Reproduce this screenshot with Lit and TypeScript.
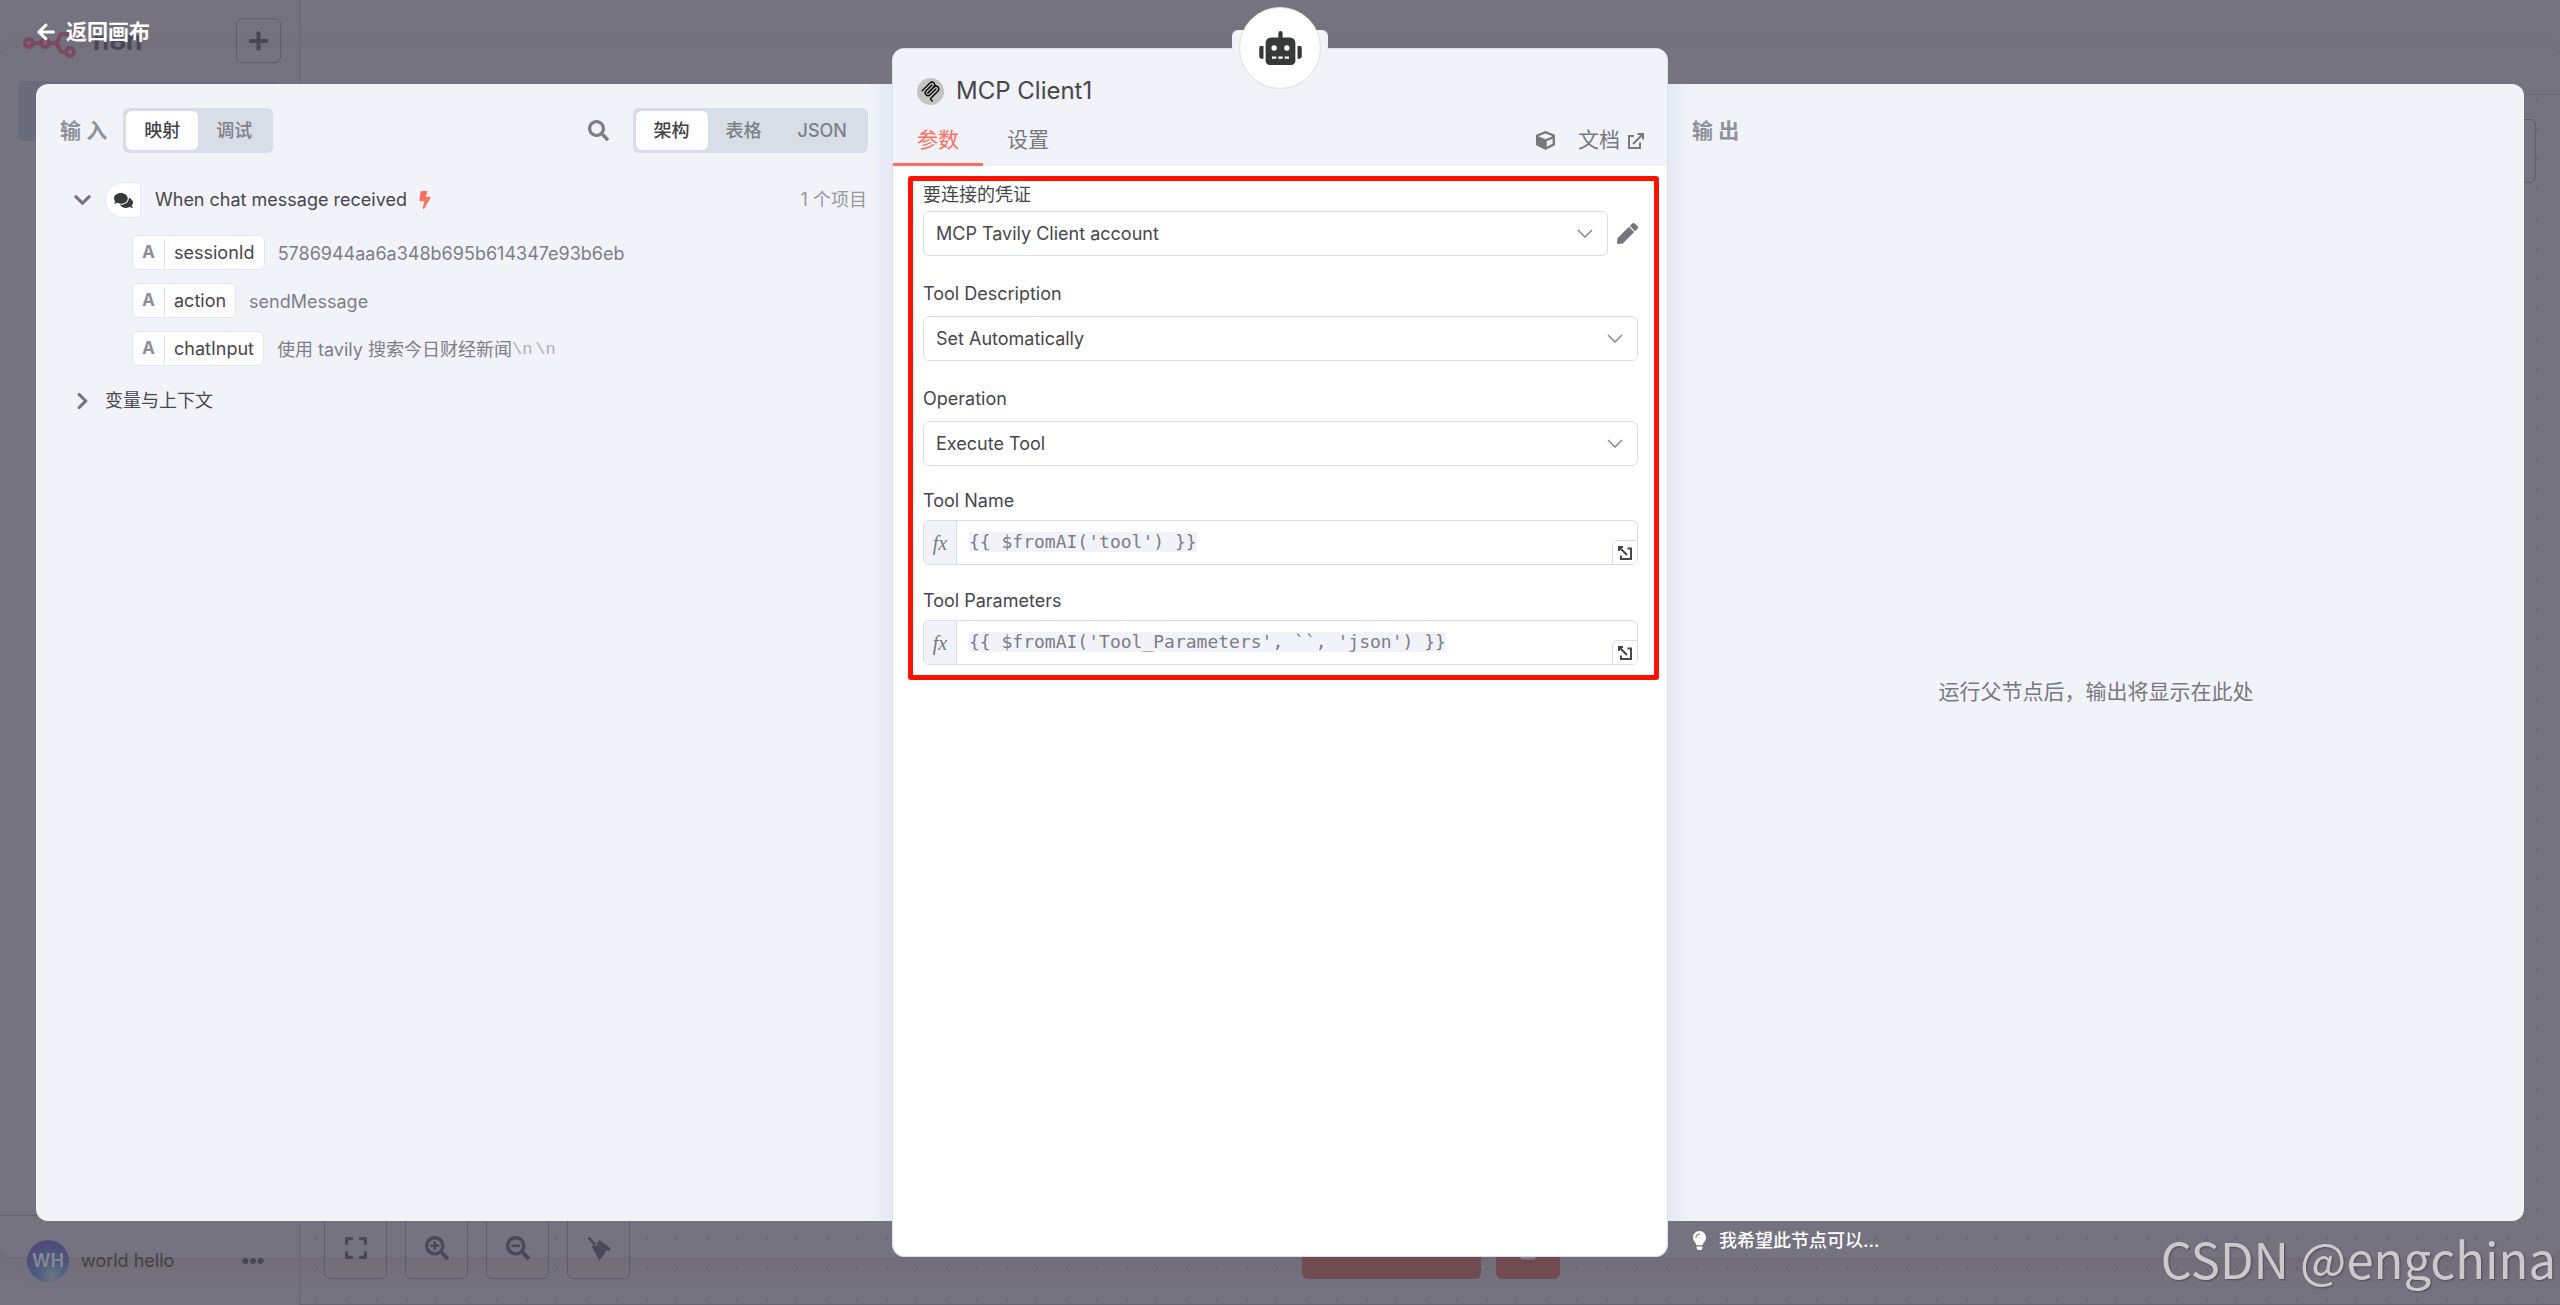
import { LitElement, html, css, svg, nothing } from "lit";
import { customElement, property } from "lit/decorators.js";

interface Glyph {
  box: string;
  paths: string[];
}

const GLYPHS: Record<string, Glyph> = {
  search: { box: "0 0 512 512", paths: ["M505 442.7L405.3 343c-4.5-4.5-10.6-7-17-7H372c27.6-35.3 44-79.7 44-128C416 93.1 322.9 0 208 0S0 93.1 0 208s93.1 208 208 208c48.3 0 92.7-16.4 128-44v16.3c0 6.4 2.5 12.5 7 17l99.7 99.7c9.4 9.4 24.6 9.4 33.9 0l28.3-28.3c9.4-9.4 9.4-24.6.1-34zM208 336c-70.7 0-128-57.2-128-128 0-70.7 57.2-128 128-128 70.7 0 128 57.2 128 128 0 70.7-57.2 128-128 128z"] },
  zoomIn: { box: "0 0 512 512", paths: ["M304 192v32c0 6.6-5.4 12-12 12h-56v56c0 6.6-5.4 12-12 12h-32c-6.6 0-12-5.4-12-12v-56h-56c-6.6 0-12-5.4-12-12v-32c0-6.6 5.4-12 12-12h56v-56c0-6.6 5.4-12 12-12h32c6.6 0 12 5.4 12 12v56h56c6.6 0 12 5.4 12 12zm201 284.7L476.7 505c-9.4 9.4-24.6 9.4-33.9 0L343 405.3c-4.5-4.5-7-10.6-7-17V372c-35.3 27.6-79.7 44-128 44C93.1 416 0 322.9 0 208S93.1 0 208 0s208 93.1 208 208c0 48.3-16.4 92.7-44 128h16.3c6.4 0 12.5 2.5 17 7l99.7 99.7c9.3 9.4 9.3 24.6 0 34zM344 208c0-75.2-60.8-136-136-136S72 132.8 72 208s60.8 136 136 136 136-60.8 136-136z"] },
  zoomOut: { box: "0 0 512 512", paths: ["M304 192v32c0 6.6-5.4 12-12 12H124c-6.6 0-12-5.4-12-12v-32c0-6.6 5.4-12 12-12h168c6.6 0 12 5.4 12 12zm201 284.7L476.7 505c-9.4 9.4-24.6 9.4-33.9 0L343 405.3c-4.5-4.5-7-10.6-7-17V372c-35.3 27.6-79.7 44-128 44C93.1 416 0 322.9 0 208S93.1 0 208 0s208 93.1 208 208c0 48.3-16.4 92.7-44 128h16.3c6.4 0 12.5 2.5 17 7l99.7 99.7c9.3 9.4 9.3 24.6 0 34zM344 208c0-75.2-60.8-136-136-136S72 132.8 72 208s60.8 136 136 136 136-60.8 136-136z"] },
  expand: { box: "0 32 448 448", paths: ["M0 180V56c0-13.300 10.700-24 24-24h124c6.600 0 12 5.400 12 12v40c0 6.600-5.400 12-12 12H64v84c0 6.600-5.400 12-12 12H12c-6.600 0-12-5.400-12-12zM288 44v40c0 6.600 5.400 12 12 12h84v84c0 6.600 5.400 12 12 12h40c6.600 0 12-5.400 12-12V56c0-13.300-10.700-24-24-24H300c-6.600 0-12 5.400-12 12zm148 276h-40c-6.600 0-12 5.400-12 12v84h-84c-6.600 0-12 5.400-12 12v40c0 6.600 5.400 12 12 12h124c13.300 0 24-10.700 24-24V332c0-6.600-5.400-12-12-12zM160 468v-40c0-6.600-5.400-12-12-12H64v-84c0-6.600-5.400-12-12-12H12c-6.600 0-12 5.400-12 12v124c0 13.300 10.700 24 24 24h124c6.600 0 12-5.400 12-12z"] },
  tidy: { box: "0 0 24 24", paths: ["M2.200 0.600L0.600 2.200L6.600 9L4.800 10.800L12.200 24L16.500 19.500L19.500 13.500L21.500 15.500L23.800 12.500L14.200 5.200L12.500 7L10.800 8.600L8.800 7.500ZM12.800 4L14 5L9.500 10L8.200 9Z"] },
  comments: { box: "0 0 576 512", paths: ["M416 192c0-88.400-93.100-160-208-160S0 103.600 0 192c0 34.300 14.100 65.900 38 92-13.400 30.200-35.500 54.200-35.800 54.500-2.200 2.300-2.800 5.700-1.500 8.700S4.800 352 8 352c36.600 0 66.900-12.300 88.700-25 32.200 15.700 70.300 25 111.300 25 114.900 0 208-71.600 208-160zm122 220c23.900-26 38-57.700 38-92 0-66.900-53.500-124.200-129.300-148.100.9 6.600 1.300 13.300 1.300 20.100 0 105.900-107.700 192-240 192-10.800 0-21.300-.8-31.700-1.900C207.800 439.600 281.800 480 368 480c41 0 79.100-9.200 111.300-25 21.800 12.700 52.100 25 88.700 25 3.200 0 6.100-1.900 7.300-4.800 1.300-2.900.7-6.300-1.500-8.700-.3-.3-22.400-24.200-35.800-54.500z"] },
  bolt: { box: "0 0 320 512", paths: ["M296 160H180.600l42.600-129.800C227.200 15 215.700 0 200 0H56C44 0 33.800 8.900 32.200 20.800l-32 240C-1.700 275.200 9.500 288 24 288h118.700L96.600 482.500c-3.600 15.200 8 29.500 23.300 29.500 8.400 0 16.400-4.400 20.800-12l176-304c9.300-15.900-2.200-36-20.700-36z"] },
  robot: { box: "0 0 640 512", paths: ["M32,224H64V416H32A31.966,31.966,0,0,1,0,384V256A31.966,31.966,0,0,1,32,224Zm512-48V448a64.063,64.063,0,0,1-64,64H160a64.063,64.063,0,0,1-64-64V176a79.974,79.974,0,0,1,80-80H288V32a32,32,0,0,1,64,0V96H464A79.974,79.974,0,0,1,544,176ZM264,256a40,40,0,1,0-40,40A39.997,39.997,0,0,0,264,256Zm-8,128H192v32h64Zm96,0H288v32h64ZM456,256a40,40,0,1,0-40,40A39.997,39.997,0,0,0,456,256Zm-8,128H384v32h64ZM640,256V384a31.966,31.966,0,0,1-32,32H576V224h32A31.966,31.966,0,0,1,640,256Z"] },
  cube: { box: "0 0 512 512", paths: ["M239.100 6.300l-208 78c-18.700 7-31.100 25-31.100 45v225.100c0 18.200 10.300 34.800 26.500 42.900l208 104c13.500 6.800 29.400 6.800 42.900 0l208-104c16.300-8.100 26.500-24.800 26.500-42.900V129.300c0-20-12.400-37.900-31.100-44.900l-208-78C262 2.200 250 2.200 239.100 6.300zM256 68.400l192 72v1.100l-192 78-192-78v-1.100l192-72zm32 356V275.500l160-65v133.900l-160 80z"] },
  chevron: { box: "0 0 448 512", paths: ["M207.029 381.476L12.686 187.132c-9.373-9.373-9.373-24.569 0-33.941l22.667-22.667c9.357-9.357 24.522-9.375 33.901-.04L224 284.505l154.745-154.021c9.379-9.335 24.544-9.317 33.901.04l22.667 22.667c9.373 9.373 9.373 24.569 0 33.941L240.971 381.476c-9.373 9.372-24.569 9.372-33.942 0z"] },
  plus: { box: "0 0 448 512", paths: ["M416 208H272V64c0-17.670-14.330-32-32-32h-32c-17.670 0-32 14.330-32 32v144H32c-17.670 0-32 14.330-32 32v32c0 17.670 14.330 32 32 32h144v144c0 17.670 14.330 32 32 32h32c17.670 0 32-14.330 32-32V304h144c17.670 0 32-14.330 32-32v-32c0-17.670-14.330-32-32-32z"] },
  arrowLeft: { box: "0 0 448 512", paths: ["M257.500 445.100l-22.200 22.200c-9.400 9.400-24.600 9.400-33.900 0L7 273c-9.400-9.400-9.400-24.600 0-33.900L201.400 44.700c9.400-9.400 24.600-9.400 33.900 0l22.200 22.200c9.500 9.500 9.300 25-.4 34.300L136.600 216H424c13.300 0 24 10.700 24 24v32c0 13.300-10.700 24-24 24H136.600l120.500 114.800c9.800 9.300 10 24.800.4 34.300z"] },
  bulb: { box: "0 0 352 512", paths: ["M96.060 454.350c.01 6.290 1.870 12.450 5.360 17.690l17.090 25.690a31.990 31.990 0 0 0 26.640 14.280h61.710a31.990 31.990 0 0 0 26.640-14.280l17.090-25.690a31.989 31.989 0 0 0 5.360-17.690l.04-38.350H96.010l.05 38.350zM0 176c0 44.370 16.450 84.850 43.560 115.780 16.520 18.850 42.360 58.230 52.210 91.450.04.26.07.52.11.78h160.240c.04-.26.07-.51.11-.78 9.850-33.220 35.690-72.600 52.210-91.450C335.550 260.850 352 220.370 352 176 352 78.610 272.910-.3 175.450 0 73.440.31 0 82.970 0 176zm176-80c-44.110 0-80 35.890-80 80 0 8.840-7.160 16-16 16s-16-7.160-16-16c0-61.760 50.240-112 112-112 8.840 0 16 7.160 16 16s-7.160 16-16 16z"] },
  pen: { box: "0 0 512 512", paths: ["M290.740 93.240l128.020 128.020-277.990 277.990-114.140 12.600C11.350 513.540-1.560 500.620.14 485.340l12.700-114.220 277.900-277.880zm207.200-19.060l-60.110-60.110c-18.750-18.750-49.160-18.750-67.910 0l-56.550 56.550 128.020 128.020 56.550-56.550c18.750-18.760 18.750-49.160 0-67.910z"] },
  dots: { box: "0 0 512 512", paths: ["M328 256c0 39.800-32.200 72-72 72s-72-32.200-72-72 32.200-72 72-72 72 32.200 72 72zm104-72c-39.800 0-72 32.200-72 72s32.200 72 72 72 72-32.200 72-72-32.200-72-72-72zm-352 0c-39.800 0-72 32.200-72 72s32.200 72 72 72 72-32.200 72-72-32.200-72-72-72z"] },
  comment: { box: "0 0 512 512", paths: ["M256 32C114.600 32 0 125.100 0 240c0 49.600 21.400 95 57 130.700C44.500 421.100 2.700 466 2.200 466.500c-2.200 2.300-2.800 5.700-1.500 8.700S4.800 480 8 480c66.300 0 116-31.800 140.600-51.400 32.700 12.300 69 19.400 107.400 19.400 141.400 0 256-93.100 256-208S397.400 32 256 32z"] },
  trash: { box: "0 0 448 512", paths: ["M432 32H312l-9.400-18.700A24 24 0 0 0 281.100 0H166.800a23.720 23.720 0 0 0-21.400 13.300L136 32H16A16 16 0 0 0 0 48v32a16 16 0 0 0 16 16h416a16 16 0 0 0 16-16V48a16 16 0 0 0-16-16zM53.200 467a48 48 0 0 0 47.900 45h245.800a48 48 0 0 0 47.900-45L416 128H32z"] },
};

@customElement("n-icon")
class NIcon extends LitElement {
  @property() name = "search";
  static styles = css`
    :host { display: inline-flex; flex: none; }
    svg { display: block; width: 100%; height: 100%; fill: currentColor; }
  `;
  render() {
    const glyph = GLYPHS[this.name];
    return html`<svg viewBox=${glyph.box} aria-hidden="true">${glyph.paths.map((d) => svg`<path d=${d}></path>`)}</svg>`;
  }
}

@customElement("n-toggle")
class NToggle extends LitElement {
  @property({ attribute: false }) options: string[] = [];
  static styles = css`
    :host { display: flex; padding: 3px; border-radius: 6px; background: #d9dde8; }
    button {
      height: 39px; padding: 0 18px; border: 0; border-radius: 6px; background: none;
      font: 500 18px/24px Inter, "Noto Sans CJK SC", sans-serif; color: #7d7f87;
    }
    .on { background: #fff; color: #414244; }
  `;
  render() {
    return this.options.map((label, i) => html`<button class=${i === 0 ? "on" : ""} aria-pressed=${i === 0}>${label}</button>`);
  }
}

@customElement("canvas-page")
class CanvasPage extends LitElement {
  static styles = css`
    :host {
      display: grid; grid-template: 95px 1fr / 300px 1fr; overflow: hidden;
      color: #4a4857; background: #75737f;
      font: 18px/24px Inter, "Noto Sans CJK SC", sans-serif;
    }
    button { display: flex; align-items: center; justify-content: center; color: inherit; font: inherit; background: none; border: 1px solid #5f5d6e; border-radius: 6px; padding: 0; }
    .side { grid-row: 1 / 3; display: flex; flex-direction: column; border-right: 1px solid #696779; }
    .brand { display: flex; align-items: center; padding: 18px 18px 0 23px; }
    .logo { width: 62px; height: 36px; fill: none; stroke: #7e4a60; stroke-width: 4; }
    .name { margin-left: 8px; font-size: 26px; line-height: 36px; font-weight: 700; }
    .plus { width: 45px; height: 45px; margin-left: auto; }
    .plus n-icon { width: 19px; height: 22px; }
    .entry { height: 60px; margin: 18px; border-radius: 6px; background: #696b7a; }
    .user { display: flex; align-items: center; margin-top: auto; height: 89px; padding: 0 35px 0 27px; border-top: 1px solid #666476; }
    .avatar { display: grid; place-items: center; width: 42px; height: 42px; border-radius: 50%; color: #8e8d97; font-weight: 600; background: radial-gradient(circle at 60% 85%, #6c7486 5%, #4c5f83 35%, #51497a 75%); }
    .who { margin-left: 12px; margin-right: auto; color: #444249; }
    .user n-icon { width: 22px; height: 22px; }
    .top { border-bottom: 1px solid #6a6878; }
    .board {
      display: flex; align-items: flex-end; padding: 0 24px 25px; border-bottom: 1px solid #66646f; position: relative;
      background: radial-gradient(circle, #696777 1px, transparent 2px) 2px -11px / 30px 30px;
    }
    .tools { display: flex; gap: 18px; }
    .tools button { width: 63px; height: 63px; background: #75737f; }
    .tools n-icon { width: 24px; height: 24px; }
    .tools .fit { width: 22px; height: 22px; }
    .run { display: flex; gap: 15px; margin-left: 672px; }
    .run button { height: 63px; padding: 0 22px; gap: 12px; border: 0; color: #8b8790; background: #744c54; }
    .run .chat { width: 179px; }
    .run n-icon { width: 20px; height: 24px; }
    .float { position: absolute; top: 24px; right: 24px; width: 60px; height: 64px; box-sizing: border-box; border: 1px solid #5f5d6e; border-radius: 6px; background: #75737f; }
  `;
  render() {
    return html`
      <nav class="side">
        <div class="brand">
          <svg class="logo" viewBox="0 0 62 36" aria-hidden="true">
            <circle cx="6" cy="20" r="4"></circle><circle cx="22" cy="20" r="4"></circle>
            <circle cx="54" cy="11" r="4"></circle><circle cx="47" cy="29" r="4"></circle>
            <path d="M10 20h8M26 20h5c3 0 4-2 5-5s2-4 5-4h9M31 20c3 0 4 2 5 5s2 4 5 4h2"></path>
          </svg>
          <span class="name">n8n</span>
          <button class="plus" aria-label="新建"><n-icon name="plus"></n-icon></button>
        </div>
        <div class="entry"></div>
        <div class="user">
          <span class="avatar">WH</span><span class="who">world hello</span><n-icon name="dots"></n-icon>
        </div>
      </nav>
      <div class="top"></div>
      <div class="board">
        <div class="float"></div>
        <div class="tools">
          <button aria-label="适应视图"><n-icon class="fit" name="expand"></n-icon></button>
          <button aria-label="放大"><n-icon name="zoomIn"></n-icon></button>
          <button aria-label="缩小"><n-icon name="zoomOut"></n-icon></button>
          <button aria-label="整理"><n-icon name="tidy"></n-icon></button>
        </div>
        <div class="run">
          <button class="chat"><n-icon name="comment"></n-icon>隐藏聊天</button>
          <button aria-label="删除"><n-icon name="trash"></n-icon></button>
        </div>
      </div>
    `;
  }
}

@customElement("input-panel")
class InputPanel extends LitElement {
  fields = [
    { key: "sessionId", value: "5786944aa6a348b695b614347e93b6eb", breaks: 0 },
    { key: "action", value: "sendMessage", breaks: 0 },
    { key: "chatInput", value: "使用 tavily 搜索今日财经新闻", breaks: 2 },
  ];
  static styles = css`
    :host { display: block; font: 18px/24px Inter, "Noto Sans CJK SC", sans-serif; color: #46474a; }
    .bar { display: flex; align-items: center; padding: 24px 24px 0 24px; }
    .title { font-size: 21px; font-weight: 600; color: #8f9199; margin-right: 16px; }
    .find { border: 0; background: none; padding: 0; width: 21px; height: 21px; margin: 0 24px 0 auto; color: #7d7f87; }
    .find n-icon { width: 21px; height: 21px; }
    .node { display: flex; align-items: center; padding: 29px 25px 0 38px; }
    .arrow { width: 17px; height: 20px; color: #74767e; }
    .side { transform: rotate(-90deg); }
    .badge { display: grid; place-items: center; width: 34px; height: 34px; margin: 0 14px; border: 1px solid #e6e9f2; border-radius: 18px 4px 4px 18px; background: #fff; color: #37383a; }
    .badge n-icon { width: 19px; height: 17px; }
    .bolt { width: 12px; height: 18px; margin-left: 12px; color: #ff6f5c; }
    .count { margin-left: auto; color: #96989f; }
    dl { display: grid; gap: 13px; margin: 17px 0 0; padding: 0 25px 0 96px; }
    .row { display: flex; align-items: center; gap: 13px; }
    dt { display: flex; align-items: center; height: 33px; border: 1px solid #e3e7f1; border-radius: 6px; background: #fff; }
    .type { width: 31px; text-align: center; font: bold 20px/28px "Liberation Mono", monospace; color: #8d8f97; border-right: 1px solid #dcdfe9; }
    .key { padding: 0 9px; }
    dd { display: flex; margin: 0; padding-top: 2px; color: #7d7f87; }
    .breaks { display: flex; gap: 3px; font: 17px/24px "Liberation Mono", monospace; color: #a9afbd; }
    .vars { display: flex; align-items: center; gap: 14px; padding: 23px 0 0 38px; }
  `;
  render() {
    return html`
      <div class="bar">
        <span class="title">输 入</span>
        <n-toggle .options=${["映射", "调试"]}></n-toggle>
        <button class="find" aria-label="搜索"><n-icon name="search"></n-icon></button>
        <n-toggle .options=${["架构", "表格", "JSON"]}></n-toggle>
      </div>
      <div class="node">
        <n-icon class="arrow" name="chevron"></n-icon>
        <span class="badge"><n-icon name="comments"></n-icon></span>
        <span>When chat message received</span>
        <n-icon class="bolt" name="bolt"></n-icon>
        <span class="count">1 个项目</span>
      </div>
      <dl>
        ${this.fields.map((f) => html`
          <div class="row">
            <dt><span class="type">A</span><span class="key">${f.key}</span></dt>
            <dd>${f.value}${f.breaks ? html`<span class="breaks">${Array.from({ length: f.breaks }, () => html`<span>\\n</span>`)}</span>` : nothing}</dd>
          </div>`)}
      </dl>
      <div class="vars"><n-icon class="arrow side" name="chevron"></n-icon><span>变量与上下文</span></div>
    `;
  }
}

@customElement("node-panel")
class NodePanel extends LitElement {
  static styles = css`
    :host {
      display: block; position: relative; box-sizing: border-box; border: 1px solid #dcdfec; border-radius: 12px; background: #fff;
      font: 18px/22px Inter, "Noto Sans CJK SC", sans-serif; color: #46474a;
    }
    .ear { position: absolute; top: -19px; left: calc(50% - 48px); width: 96px; height: 24px; border-radius: 6px 6px 0 0; background: #f1f3f9; }
    .node { position: absolute; top: -42px; left: calc(50% - 41px); display: grid; place-items: center; box-sizing: border-box; width: 82px; height: 82px; border: 1px solid #dcdfec; border-radius: 50%; background: #fff; color: #37383a; }
    .node n-icon { width: 43px; height: 34px; }
    header { border-radius: 11px 11px 0 0; background: #f1f3f9; }
    .head { display: flex; align-items: center; gap: 12px; padding: 24px 23px 0 24px; }
    .head svg { width: 27px; height: 27px; }
    h1 { margin: 0; font-size: 24px; line-height: 36px; font-weight: 400; }
    .tabs { display: flex; align-items: center; padding: 6px 23px 0 0; font-size: 21px; line-height: 30px; color: #77797f; }
    .tabs button, .tabs a { font: inherit; color: inherit; text-decoration: none; background: none; border: 0; border-bottom: 3px solid transparent; padding: 10px 24px 8px; display: flex; align-items: center; }
    .tabs .on { color: #ff6f5c; border-color: #ff6f5c; }
    .cube { width: 19px; height: 19px; margin-left: auto; }
    .tabs a { padding: 10px 0 8px; margin-left: 23px; gap: 8px; }
    .tabs a svg { width: 16px; height: 16px; margin-top: 2px; fill: none; stroke: currentColor; stroke-width: 2; }
    form { position: relative; margin: 18px 29px 0 30px; display: grid; gap: 27px; }
    .mark { position: absolute; inset: -8px -21px -15px -15px; border: 5px solid #ff1100; border-radius: 3px; pointer-events: none; }
    .field { display: grid; gap: 11px; }
    .tight { gap: 5px; }
    .stack { display: grid; gap: 25px; margin-top: -3px; }
    .stack .field { gap: 8px; }
    label { justify-self: start; }
    .line { display: flex; align-items: center; }
    .pick { flex: 1; display: grid; align-items: center; }
    .pick > * { grid-area: 1 / 1; }
    .pick svg { justify-self: end; width: 16px; height: 9px; margin-right: 15px; fill: none; stroke: #7b7d85; stroke-width: 1.3; pointer-events: none; }
    select { appearance: none; width: 100%; height: 45px; padding: 0 40px 0 12px; border: 1px solid #d9dce9; border-radius: 6px; background: #fff; font: inherit; color: inherit; }
    .edit { border: 0; background: none; padding: 0; width: 21px; height: 21px; margin-left: 9px; color: #74767e; }
    .edit n-icon { width: 21px; height: 21px; }
    .expr { display: flex; align-items: center; height: 45px; box-sizing: border-box; border: 1px solid #d9dce9; border-radius: 6px; overflow: hidden; }
    .fx { display: grid; place-items: center; align-self: stretch; width: 32px; border-right: 1px solid #d9dce9; background: #f1f3f9; font: italic 20px/24px "Liberation Serif", serif; color: #77797f; }
    input { field-sizing: content; border: 0; margin: 0 0 2px 12px; padding: 0; height: 20px; background: #f1f3f9; font: 18px/20px "DejaVu Sans Mono", monospace; color: #7b7d83; }
    .open { align-self: flex-end; margin: 0 -1px -1px auto; width: 26px; height: 25px; padding: 0; display: grid; place-items: center; border: 1px solid #d9dce9; border-radius: 6px 0 0 0; background: #fff; color: #46474a; }
    .open svg { width: 14px; height: 14px; fill: none; stroke: currentColor; stroke-width: 2; }
  `;

  private picker(id: string, value: string) {
    return html`<div class="pick">
      <select id=${id}><option>${value}</option></select>
      <svg viewBox="0 0 16 9" aria-hidden="true"><path d="M1 1L8 8L15 1"></path></svg>
    </div>`;
  }

  private expression(id: string, label: string, value: string) {
    return html`<div class="field">
      <label for=${id}>${label}</label>
      <div class="expr">
        <span class="fx">fx</span>
        <input id=${id} size=${value.length} .value=${value} />
        <button class="open" type="button" aria-label="展开">
          <svg viewBox="0 0 14 14" aria-hidden="true"><path d="M1.500 1.500L9 9M1 5V1H5M9.500 2.500H13V13H3V9.500"></path></svg>
        </button>
      </div>
    </div>`;
  }

  render() {
    return html`
      <div class="ear"></div>
      <header>
        <div class="head">
          <svg viewBox="0 0 28 28" aria-hidden="true">
            <circle cx="14" cy="14" r="14" fill="#c4c4c4"></circle>
            <g transform="translate(3 3) scale(.122)" fill="none" stroke="#000" stroke-width="12" stroke-linecap="round">
              <path d="M18 84.853L85.882 16.971C95.255 7.598 110.451 7.598 119.823 16.971C129.196 26.343 129.196 41.539 119.823 50.912L68.558 102.177"></path>
              <path d="M69.265 101.470L119.823 50.912C129.196 41.539 144.392 41.539 153.765 50.912L154.118 51.265C163.491 60.638 163.491 75.834 154.118 85.206L92.725 146.600C89.601 149.724 89.601 154.789 92.725 157.913L105.331 170.520"></path>
              <path d="M102.853 33.941L52.648 84.146C43.276 93.518 43.276 108.714 52.648 118.087C62.021 127.459 77.217 127.459 86.589 118.087L136.794 67.882"></path>
            </g>
          </svg>
          <h1>MCP Client1</h1>
        </div>
        <div class="tabs">
          <button class="on">参数</button><button>设置</button>
          <n-icon class="cube" name="cube"></n-icon>
          <a href="#docs">文档<svg viewBox="0 0 16 16" aria-hidden="true"><path d="M6 3H1V15H12V9.500M5 11L14 2M9.500 1H15V6.500"></path></svg></a>
        </div>
      </header>
      <div class="node"><n-icon name="robot"></n-icon></div>
      <form>
        <div class="field tight">
          <label for="cred">要连接的凭证</label>
          <div class="line">
            ${this.picker("cred", "MCP Tavily Client account")}
            <button class="edit" type="button" aria-label="编辑"><n-icon name="pen"></n-icon></button>
          </div>
        </div>
        <div class="field"><label for="desc">Tool Description</label>${this.picker("desc", "Set Automatically")}</div>
        <div class="field"><label for="op">Operation</label>${this.picker("op", "Execute Tool")}</div>
        <div class="stack">
          ${this.expression("tool", "Tool Name", "{{ $fromAI('tool') }}")}
          ${this.expression("params", "Tool Parameters", "{{ $fromAI('Tool_Parameters', ``, 'json') }}")}
        </div>
        <div class="mark"></div>
      </form>
    `;
  }
}

@customElement("app-root")
class AppRoot extends LitElement {
  static styles = css`
    :host { display: block; font: 18px/24px Inter, "Noto Sans CJK SC", sans-serif; }
    .screen { display: grid; min-height: 100vh; position: relative; overflow: hidden; }
    canvas-page, .modal { grid-area: 1 / 1; }
    .modal { z-index: 1; display: flex; flex-direction: column; padding-bottom: 48px; }
    .back { display: flex; align-items: center; gap: 11px; height: 48px; padding: 15px 37px 0; box-sizing: border-box; font-size: 21px; font-weight: 600; color: #fff; text-decoration: none; align-self: flex-start; }
    .back n-icon { width: 18px; height: 20px; }
    .views { flex: 1; display: grid; grid-template: 36px 1fr 36px / 1fr 776px 1fr; padding: 0 36px; border-radius: 12px; box-shadow: 0 6px 30px rgba(68, 50, 60, 0.14); }
    input-panel { grid-area: 2 / 1; border-radius: 12px 0 0 12px; background: linear-gradient(to left, #e5e9f4, #f1f3f9 24px); }
    node-panel { grid-area: 1 / 2 / 4 / 3; }
    .output { grid-area: 2 / 3; display: flex; flex-direction: column; border-radius: 0 12px 12px 0; background: linear-gradient(to right, #e5e9f4, #f1f3f9 24px); color: #77797f; font-size: 21px; }
    .title { padding: 35px 24px 20px; font-weight: 600; color: #8f9199; }
    .empty { flex: 1; display: grid; place-items: center; }
    .empty p { margin: 0; }
    .idea { grid-area: 3 / 3; display: flex; align-items: center; gap: 13px; padding: 3px 25px 0; color: #fff; font-weight: 500; text-decoration: none; }
    .idea n-icon { width: 13px; height: 19px; }
    .stamp { position: absolute; right: 4px; bottom: 11px; z-index: 2; font: 49px/72px "Noto Sans CJK SC", sans-serif; color: #cbc9cd; text-shadow: 1px 1px 2px #4c4a52; }
  `;
  render() {
    return html`
      <div class="screen">
        <canvas-page></canvas-page>
        <div class="modal">
          <a class="back" href="#canvas"><n-icon name="arrowLeft"></n-icon>返回画布</a>
          <main class="views">
            <input-panel></input-panel>
            <node-panel></node-panel>
            <section class="output">
              <div class="title">输 出</div>
              <div class="empty"><p>运行父节点后，输出将显示在此处</p></div>
            </section>
            <a class="idea" href="#feedback"><n-icon name="bulb"></n-icon>我希望此节点可以...</a>
          </main>
        </div>
        <div class="stamp">CSDN @engchina</div>
      </div>
    `;
  }
}
